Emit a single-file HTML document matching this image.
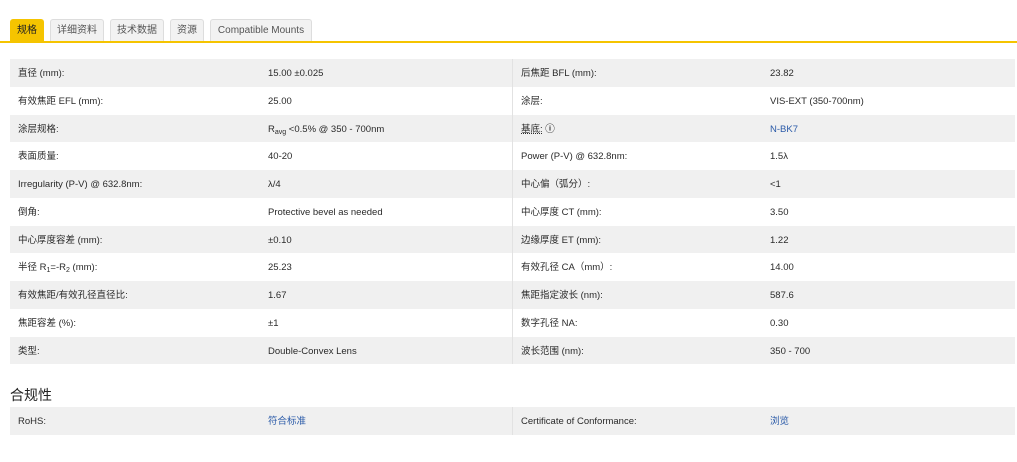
<!DOCTYPE html>
<html><head><meta charset="utf-8"><style>
body{margin:0;background:#fff;font-family:"Liberation Sans","Noto Sans CJK SC",sans-serif;color:#2a2a2a;font-size:9.5px;width:1017px;height:462px;overflow:hidden;position:relative}
.tab{position:absolute;top:19px;height:22px;line-height:22px;font-size:10px;color:#555;background:#f2f2f2;border:1px solid #ddd;border-bottom:none;border-radius:3px 3px 0 0;box-sizing:border-box;text-align:center}
.tab.on{background:#f5c400;color:#222;border-color:#f5c400}
.line{position:absolute;left:0;top:41px;width:1017px;height:2px;background:#f5c400}
.tbl{position:absolute;left:10px;width:1005px}
.r{height:27.75px;position:relative}
.r.g{background:#f0f0f0}
.r span{position:absolute;top:9px;line-height:12px;white-space:nowrap}
.a{left:8px}.b{left:258px}.c{left:511px}.d{left:760px}
.r:after{content:"";position:absolute;left:502px;top:0;bottom:0;width:1px;background:#e2e2e2}
.lk{color:#2a5aa8}
sub{font-size:7px;position:relative;top:2px;vertical-align:baseline;line-height:0}
h3{position:absolute;left:10px;top:385px;margin:0;font-size:14px;font-weight:normal;color:#222}
</style></head><body>
<div class="tab on" style="left:10px;width:34px">规格</div>
<div class="tab" style="left:50px;width:54px">详细资料</div>
<div class="tab" style="left:110px;width:54px">技术数据</div>
<div class="tab" style="left:170px;width:34px">资源</div>
<div class="tab" style="left:210px;width:102px">Compatible Mounts</div>
<div class="line"></div>
<div class="tbl" style="top:59px">
<div class="r g"><span class="a">直径 (mm):</span><span class="b">15.00 ±0.025</span><span class="c">后焦距 BFL (mm):</span><span class="d">23.82</span></div>
<div class="r"><span class="a">有效焦距 EFL (mm):</span><span class="b">25.00</span><span class="c">涂层:</span><span class="d">VIS-EXT (350-700nm)</span></div>
<div class="r g"><span class="a">涂层规格:</span><span class="b">R<sub>avg</sub> &lt;0.5% @ 350 - 700nm</span><span class="c"><u style="text-decoration:underline dotted">基底:</u> <b>ⓘ</b></span><span class="d lk">N-BK7</span></div>
<div class="r"><span class="a">表面质量:</span><span class="b">40-20</span><span class="c">Power (P-V) @ 632.8nm:</span><span class="d">1.5λ</span></div>
<div class="r g"><span class="a">Irregularity (P-V) @ 632.8nm:</span><span class="b">λ/4</span><span class="c">中心偏（弧分）:</span><span class="d">&lt;1</span></div>
<div class="r"><span class="a">倒角:</span><span class="b">Protective bevel as needed</span><span class="c">中心厚度 CT (mm):</span><span class="d">3.50</span></div>
<div class="r g"><span class="a">中心厚度容差 (mm):</span><span class="b">±0.10</span><span class="c">边缘厚度 ET (mm):</span><span class="d">1.22</span></div>
<div class="r"><span class="a">半径 R<sub>1</sub>=-R<sub>2</sub> (mm):</span><span class="b">25.23</span><span class="c">有效孔径 CA（mm）:</span><span class="d">14.00</span></div>
<div class="r g"><span class="a">有效焦距/有效孔径直径比:</span><span class="b">1.67</span><span class="c">焦距指定波长 (nm):</span><span class="d">587.6</span></div>
<div class="r"><span class="a">焦距容差 (%):</span><span class="b">±1</span><span class="c">数字孔径 NA:</span><span class="d">0.30</span></div>
<div class="r g"><span class="a">类型:</span><span class="b">Double-Convex Lens</span><span class="c">波长范围 (nm):</span><span class="d">350 - 700</span></div>
</div>
<h3>合规性</h3>
<div class="tbl" style="top:407px">
<div class="r g"><span class="a">RoHS:</span><span class="b lk">符合标准</span><span class="c">Certificate of Conformance:</span><span class="d lk">浏览</span></div>
</div>
</body></html>
